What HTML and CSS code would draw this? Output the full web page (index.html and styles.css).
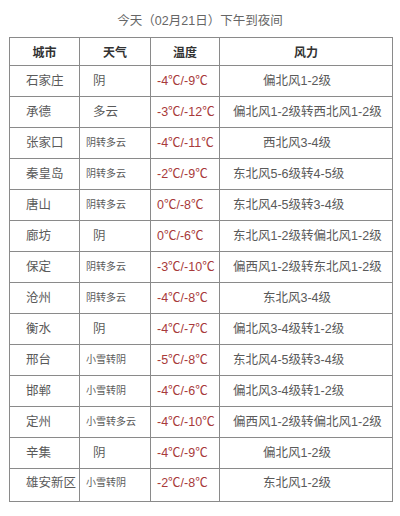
FILE: index.html
```html
<!DOCTYPE html>
<html lang="zh-CN">
<head>
<meta charset="utf-8">
<title>今天（02月21日）下午到夜间</title>
<link rel="stylesheet" href="styles.css">
</head>
<body>
<div class="page">
  <div class="title">今天（02月21日）下午到夜间</div>
  <table class="wx">
    <colgroup>
      <col class="c1"><col class="c2"><col class="c3"><col class="c4">
    </colgroup>
    <thead>
      <tr class="hd"><th>城市</th><th>天气</th><th>温度</th><th>风力</th></tr>
    </thead>
    <tbody>
      <tr><td class="city">石家庄</td><td class="w">阴</td><td class="t">-4℃/-9℃</td><td class="wind">偏北风1-2级</td></tr>
      <tr><td class="city">承德</td><td class="w">多云</td><td class="t">-3℃/-12℃</td><td class="wind wl">偏北风1-2级转西北风1-2级</td></tr>
      <tr><td class="city">张家口</td><td class="w sm">阴转多云</td><td class="t">-4℃/-11℃</td><td class="wind">西北风3-4级</td></tr>
      <tr><td class="city">秦皇岛</td><td class="w sm">阴转多云</td><td class="t">-2℃/-9℃</td><td class="wind wl">东北风5-6级转4-5级</td></tr>
      <tr><td class="city">唐山</td><td class="w sm">阴转多云</td><td class="t">0℃/-8℃</td><td class="wind wl">东北风4-5级转3-4级</td></tr>
      <tr><td class="city">廊坊</td><td class="w">阴</td><td class="t">0℃/-6℃</td><td class="wind wl">东北风1-2级转偏北风1-2级</td></tr>
      <tr><td class="city">保定</td><td class="w sm">阴转多云</td><td class="t">-3℃/-10℃</td><td class="wind wl">偏西风1-2级转东北风1-2级</td></tr>
      <tr><td class="city">沧州</td><td class="w sm">阴转多云</td><td class="t">-4℃/-8℃</td><td class="wind">东北风3-4级</td></tr>
      <tr><td class="city">衡水</td><td class="w">阴</td><td class="t">-4℃/-7℃</td><td class="wind wl">偏北风3-4级转1-2级</td></tr>
      <tr><td class="city">邢台</td><td class="w sm">小雪转阴</td><td class="t">-5℃/-8℃</td><td class="wind wl">东北风4-5级转3-4级</td></tr>
      <tr><td class="city">邯郸</td><td class="w sm">小雪转阴</td><td class="t">-4℃/-6℃</td><td class="wind wl">偏北风3-4级转1-2级</td></tr>
      <tr><td class="city">定州</td><td class="w sm">小雪转多云</td><td class="t">-4℃/-10℃</td><td class="wind wl">偏西风1-2级转偏北风1-2级</td></tr>
      <tr><td class="city">辛集</td><td class="w">阴</td><td class="t">-4℃/-9℃</td><td class="wind">偏北风1-2级</td></tr>
      <tr class="last"><td class="city">雄安新区</td><td class="w sm">小雪转阴</td><td class="t">-2℃/-8℃</td><td class="wind">东北风1-2级</td></tr>
    </tbody>
  </table>
</div>
</body>
</html>
```

FILE: styles.css
```css
html, body {
  margin: 0;
  padding: 0;
  background: #ffffff;
}

.page {
  width: 400px;
  padding: 0 0 0 9px;
  box-sizing: border-box;
  font-family: "Liberation Sans", "Noto Sans CJK SC", sans-serif;
  color: #5a5a5a;
}

.title {
  height: 37px;
  padding-top: 12px;
  padding-right: 9px;
  box-sizing: border-box;
  text-align: center;
  font-size: 12.5px;
  line-height: 18px;
  color: #666666;
}

.wx {
  border-collapse: collapse;
  table-layout: fixed;
  width: 383px;
}

.c1 { width: 70px; }
.c2 { width: 71px; }
.c3 { width: 69px; }
.c4 { width: 173px; }

.wx th,
.wx td {
  border: 1px solid #8a8a8a;
  padding: 0;
  vertical-align: middle;
  white-space: nowrap;
  overflow: hidden;
}

.wx .hd th {
  height: 27px;
  font-size: 12px;
  font-weight: bold;
  color: #333333;
  text-align: center;
  font-family: "Noto Sans CJK SC", sans-serif;
}

.wx td {
  height: 30px;
  font-size: 12.5px;
  line-height: 16px;
}

.wx .last td {
  height: 26px;
  vertical-align: top;
  padding-top: 6px;
}

.wx .city {
  padding-left: 16px;
  text-align: left;
}

.wx .w {
  padding-left: 13px;
  text-align: left;
}

.wx .w.sm {
  padding-left: 6px;
  font-size: 10px;
}

.wx .t {
  padding-left: 6px;
  color: #a83a3a;
  text-align: left;
}

.wx .wind {
  text-align: center;
  padding-right: 18px;
}

.wx .wind.wl {
  text-align: left;
  padding-left: 13px;
  padding-right: 0;
}
```
